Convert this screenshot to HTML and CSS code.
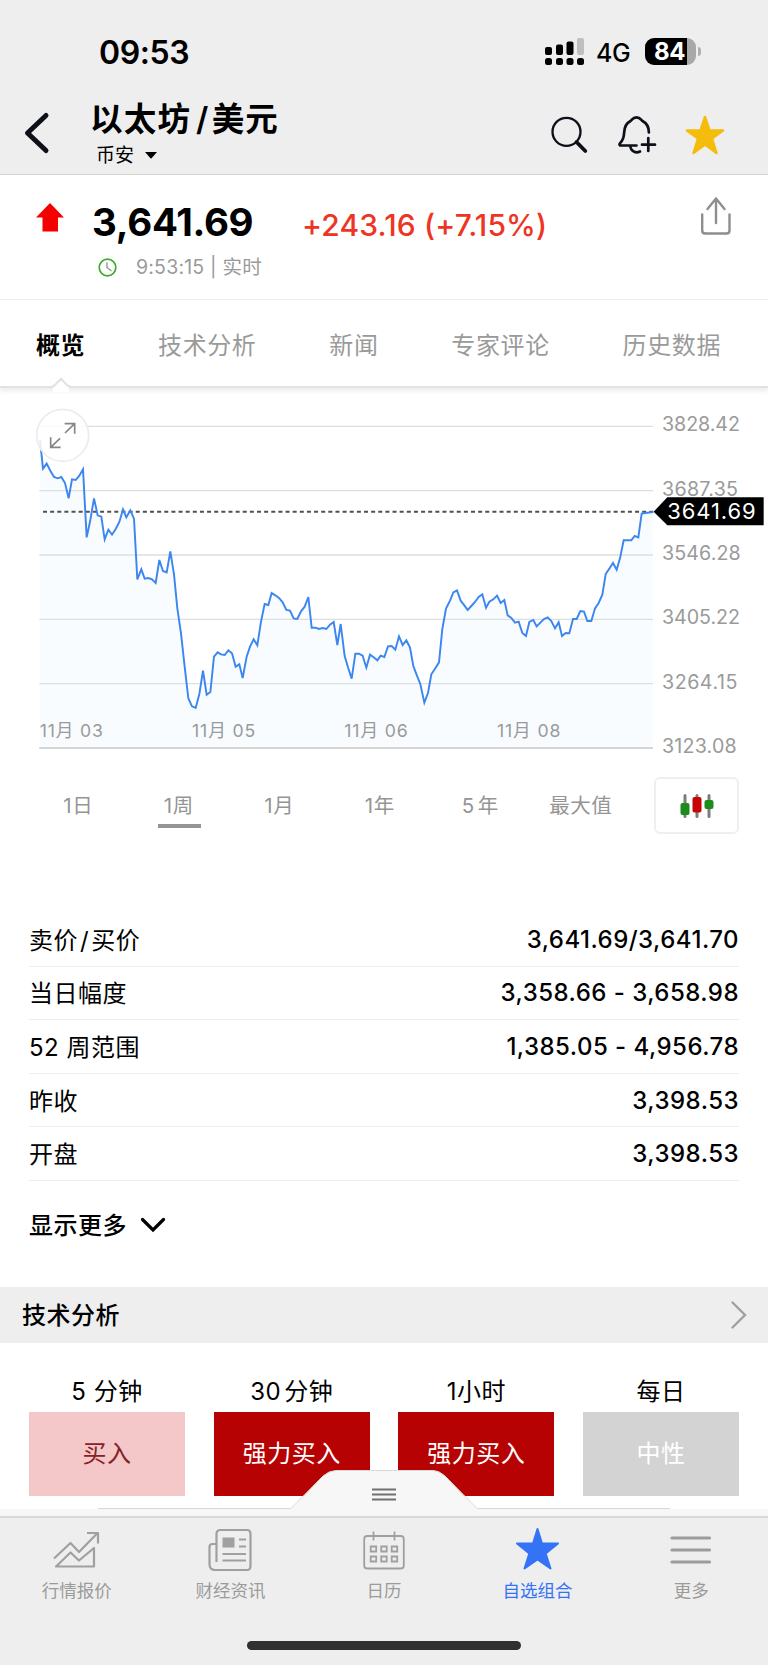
FILE: index.html
```html
<!DOCTYPE html>
<html lang="zh-CN">
<head>
<meta charset="utf-8">
<title>以太坊/美元</title>
<link rel="stylesheet" href="styles.css">
</head>
<body>
<main class="screen">
  <header class="top">
    <div class="status">
      <span class="time">09:53</span>
      <svg class="signal" width="40" height="28" viewBox="0 0 40 28"><g fill="#000"><rect x="0" y="9" width="7" height="8" rx="2"/><rect x="11" y="6.500" width="7" height="10.500" rx="2"/><rect x="21.500" y="3.500" width="7" height="13.500" rx="2"/><rect x="0" y="20" width="7" height="7" rx="2.500"/><rect x="11" y="20" width="7" height="7" rx="2.500"/><rect x="21.500" y="20" width="7" height="7" rx="2.500"/><rect x="32" y="20" width="7" height="7" rx="2.500"/></g><rect x="32" y="0" width="7" height="17" rx="2" fill="#bfbfbf"/></svg>
      <span class="net">4G</span>
      <span class="battery"><span class="level">84</span></span><span class="nub"></span>
    </div>
    <div class="nav">
      <svg class="back" width="26" height="44" viewBox="0 0 26 44"><path d="M23 4.500 4.500 22l18.500 17.500" fill="none" stroke="#0d1019" stroke-width="5" stroke-linecap="round" stroke-linejoin="round"/></svg>
      <div class="names">
        <h1>以太坊<i>/</i>美元</h1>
        <div class="exchange">币安<svg width="12" height="7" viewBox="0 0 12 7"><path d="M0 0h12L6.500 6.200q-.5.500-1 0z"/></svg></div>
      </div>
      <svg class="search" width="38" height="38" viewBox="0 0 38 38" fill="none" stroke="#0d1019"><circle cx="15.500" cy="15.800" r="14" stroke-width="2.300"/><path d="m25.500 26 8.800 9" stroke-width="3.800" stroke-linecap="round"/></svg>
      <svg class="bell" width="40" height="40" viewBox="0 0 40 40" fill="none" stroke="#0d1019" stroke-width="2.700" stroke-linecap="round" stroke-linejoin="round"><path d="M19.500 30.500H3q-1.200-.8.300-2.600c3-3 3.600-5.400 3.800-9.900.2-7 2.400-10 6.400-12 1.600-.8 2-3.700 6-3.700s4.400 2.900 6 3.700c4 2 6.400 5 6.400 11.500M13.500 32.500c1 4 5.500 6 9.500 4M31.300 23v13M25 29.700h13"/></svg>
      <svg class="fav" width="40" height="40" viewBox="0 0 40 40"><path d="M20 2 24.500 15.500H38L27 23.500 31.500 38 20 29.500 8.500 38 13 23.500 2 15.500H15.500Z" fill="#f4bc0b" stroke="#f4bc0b" stroke-width="2.500" stroke-linejoin="round"/></svg>
    </div>
  </header>

  <section class="quote">
    <svg class="up" width="28" height="29" viewBox="0 0 28 29"><path d="M14 0 28 14.500H22V28.500H6.500V14.500H0Z" fill="#f40000"/></svg>
    <div class="price-block">
      <div class="price-line"><strong>3,641.69</strong><span class="change">+243.16 (+7.15%)</span></div>
      <div class="stamp"><svg width="19" height="19" viewBox="0 0 19 19" fill="none"><circle cx="9.500" cy="9.500" r="8.300" stroke="#3fab2b" stroke-width="1.700"/><path d="M9 4.500V9.500l4.500 3.500" stroke="#8c9a8c" stroke-width="1.400"/></svg><span>9:53:15 | 实时</span></div>
    </div>
    <svg class="share" width="30" height="38" viewBox="0 0 30 38" fill="none" stroke="#8e8e8e" stroke-width="2.400" stroke-linecap="round" stroke-linejoin="round"><path d="M1.200 17.500V33.500q0 3 3 3H25.500q3 0 3-3V17.500M15 26V1.500M6.500 12 15 1.500 23.500 12"/></svg>
  </section>

  <nav class="tabs">
    <a class="on">概览</a><a>技术分析</a><a>新闻</a><a>专家评论</a><a>历史数据</a>
    <svg class="notch" width="20" height="14" viewBox="0 0 20 14"><path d="M2 8.500 10 1 18 8.500 18 14H2Z" fill="#fff"/><path d="M0 8.800Q2.500 8.800 4 7L10 .8 16 7Q17.500 8.800 20 8.800" fill="none" stroke="#e2e2e2" stroke-width="2"/></svg>
  </nav>

  <section class="chart">
    <svg width="768" height="370" viewBox="0 0 2304 1110">
      <path d="M120 150 129 236 140 221 151 242 162 261 173 265 184 261 195 279 206 325 216 268 227 270 238 257 249 238 260 442 271 390 282 325 293 376 304 380 314 448 325 419 336 434 347 417 358 396 369 358 379 382 391 361 402 386 412 568 424 538 434 566 445 564 456 568 467 579 478 510 489 543 500 547 511 484 522 553 532 655 543 730 554 830 565 925 576 949 587 954 598 912 609 842 620 914 631 906 642 800 653 787 663 793 674 795 685 781 696 790 707 830 718 823 728 864 740 800 750 770 761 748 772 766 783 695 794 642 805 645 815 609 826 616 837 624 848 637 859 660 870 662 881 685 892 687 903 664 914 650 925 621 935 713 946 713 957 717 968 714 979 717 990 704 1001 696 1012 765 1022 702 1034 798 1044 832 1055 866 1066 791 1077 791 1088 797 1099 833 1110 794 1121 802 1132 811 1142 797 1153 801 1164 769 1175 768 1186 779 1197 739 1208 765 1219 751 1230 773 1240 828 1252 860 1261 882 1273 938 1284 909 1294 853 1306 835 1317 817 1327 717 1338 656 1350 632 1360 607 1371 601 1382 632 1393 646 1403 660 1414 648 1425 636 1436 621 1447 613 1458 653 1468 635 1480 628 1491 617 1502 639 1513 630 1523 676 1534 684 1545 698 1556 695 1567 729 1578 738 1588 696 1600 690 1610 709 1621 698 1632 687 1643 682 1654 693 1665 715 1676 697 1686 738 1697 729 1708 730 1719 687 1730 687 1741 663 1752 665 1762 693 1774 693 1785 655 1796 639 1807 614 1817 552 1828 536 1839 519 1850 539 1860 505 1871 451 1894 451 1904 438 1915 442 1925 371 1959 366V1073H120Z" fill="#f8fcff"/>
      <g stroke="#dcdfe0" stroke-width="4"><path d="M118 109H1959M118 302H1959M118 495H1959M118 688H1959M118 881H1959"/><path d="M118 1074H1959" stroke="#d3d5d6" stroke-width="6"/></g>
      <path d="M129 365H1965" stroke="#505050" stroke-width="6" stroke-dasharray="12 9.400"/>
      <path d="M120 150 129 236 140 221 151 242 162 261 173 265 184 261 195 279 206 325 216 268 227 270 238 257 249 238 260 442 271 390 282 325 293 376 304 380 314 448 325 419 336 434 347 417 358 396 369 358 379 382 391 361 402 386 412 568 424 538 434 566 445 564 456 568 467 579 478 510 489 543 500 547 511 484 522 553 532 655 543 730 554 830 565 925 576 949 587 954 598 912 609 842 620 914 631 906 642 800 653 787 663 793 674 795 685 781 696 790 707 830 718 823 728 864 740 800 750 770 761 748 772 766 783 695 794 642 805 645 815 609 826 616 837 624 848 637 859 660 870 662 881 685 892 687 903 664 914 650 925 621 935 713 946 713 957 717 968 714 979 717 990 704 1001 696 1012 765 1022 702 1034 798 1044 832 1055 866 1066 791 1077 791 1088 797 1099 833 1110 794 1121 802 1132 811 1142 797 1153 801 1164 769 1175 768 1186 779 1197 739 1208 765 1219 751 1230 773 1240 828 1252 860 1261 882 1273 938 1284 909 1294 853 1306 835 1317 817 1327 717 1338 656 1350 632 1360 607 1371 601 1382 632 1393 646 1403 660 1414 648 1425 636 1436 621 1447 613 1458 653 1468 635 1480 628 1491 617 1502 639 1513 630 1523 676 1534 684 1545 698 1556 695 1567 729 1578 738 1588 696 1600 690 1610 709 1621 698 1632 687 1643 682 1654 693 1665 715 1676 697 1686 738 1697 729 1708 730 1719 687 1730 687 1741 663 1752 665 1762 693 1774 693 1785 655 1796 639 1807 614 1817 552 1828 536 1839 519 1850 539 1860 505 1871 451 1894 451 1904 438 1915 442 1925 371 1959 366" fill="none" stroke="#3c86f0" stroke-width="5.800" stroke-linejoin="miter"/>
      <g class="axis">
        <text x="1986" y="124" textLength="234">3828.42</text><text x="1986" y="317" textLength="228">3687.35</text><text x="1986" y="510" textLength="236">3546.28</text><text x="1986" y="703" textLength="234">3405.22</text><text x="1986" y="896" textLength="226">3264.15</text><text x="1986" y="1089" textLength="224">3123.08</text>
      </g>
      <g class="dates">
        <text x="119" y="1041" textLength="190">11月 03</text><text x="576" y="1041" textLength="190">11月 05</text><text x="1033" y="1041" textLength="190">11月 06</text><text x="1491" y="1041" textLength="190">11月 08</text>
      </g>
      <path d="M1961 365 2002 322H2291V406H2002Z" fill="#000"/>
      <text class="tag" x="2002" y="388" textLength="265">3641.69</text>
      <circle cx="188" cy="136" r="78" fill="#fff" fill-opacity=".85" stroke="#ececec" stroke-width="5"/>
      <path d="M195 129 224 101M194 101H224V131M180 145 152 172M152 142V172H182" fill="none" stroke="#858585" stroke-width="5"/>
    </svg>
  </section>

  <section class="ranges">
    <a><b>1日</b></a><a class="on"><b>1周</b></a><a><b>1月</b></a><a><b>1年</b></a><a><b>5<s></s>年</b></a><a><b>最大值</b></a>
    <span class="candles"><svg width="34" height="24" viewBox="0 0 34 24"><g stroke="#7d7d7d" stroke-width="3" stroke-linecap="round"><path d="M5 1.500V22.500M17 1.500V22.500M29 1.500V22.500"/></g><g><rect x=".5" y="9" width="9" height="12" rx="2" fill="#1c8c1c"/><rect x="12.500" y="3" width="9" height="15.500" rx="2" fill="#c60606"/><rect x="24.500" y="6" width="9" height="9" rx="2" fill="#1c8c1c"/></g></svg></span>
  </section>

  <dl class="facts">
    <div><dt>卖价<i>/</i>买价</dt><dd>3,641.69/3,641.70</dd></div>
    <div><dt>当日幅度</dt><dd>3,358.66 - 3,658.98</dd></div>
    <div><dt>52 周范围</dt><dd>1,385.05 - 4,956.78</dd></div>
    <div><dt>昨收</dt><dd>3,398.53</dd></div>
    <div><dt>开盘</dt><dd>3,398.53</dd></div>
  </dl>
  <div class="more"><span>显示更多</span><svg width="26" height="16" viewBox="0 0 26 16"><path d="M2.500 2.500 13 13 23.500 2.500" fill="none" stroke="#000" stroke-width="3.200" stroke-linecap="round"/></svg></div>

  <div class="heading"><span>技术分析</span><svg width="17" height="30" viewBox="0 0 17 30"><path d="M2.500 2.500 15 15 2.500 27.500" fill="none" stroke="#a0a0a0" stroke-width="2.400" stroke-linecap="round"/></svg></div>

  <section class="signals">
    <div><h3>5 分钟</h3><p class="buy">买入</p></div>
    <div><h3>30<s></s>分钟</h3><p class="strong">强力买入</p></div>
    <div><h3>1小时</h3><p class="strong">强力买入</p></div>
    <div><h3>每日</h3><p class="neutral">中性</p></div>
  </section>

  <footer class="dock">
    <svg class="drawer" width="768" height="47" viewBox="0 0 768 47"><path d="M0 39H291L322 7Q329 .5 336 .5H433Q439 .5 445 6L477 39H768V47H0Z" fill="#f7f7f7"/><path d="M98 38.500H291L323 6Q329 .5 336 .5H433Q439 .5 445 6L477 38.500H670" fill="none" stroke="#d8d8d8"/><path d="M372 19.500H396M372 24.500H396M372 29.500H396" stroke="#707070" stroke-width="1.800"/></svg>
    <nav class="tabbar">
      <a><svg width="48" height="46" viewBox="0 0 48 46" fill="none" stroke="#a0a0a0" stroke-width="2.200" stroke-linejoin="round"><path d="M1 30.500 17.500 15 26 24 44.500 5M34 5H45V15.500M3 38.500 17.500 24.500 26 32.500 41 20V38.500Z"/></svg>行情报价</a>
      <a><svg width="48" height="46" viewBox="0 0 48 46" fill="none" stroke="#a0a0a0" stroke-width="2.200"><path d="M10.500 34V6Q10.500 2 14.500 2H41Q44.500 2 44.500 6V38Q44.500 42 41 42H9Q3.500 42 3.500 36V19Q3.500 16 6.500 16H10.500"/><path d="M16.500 26H40M16.500 32.500H40M33 11.500H40M33 18.500H40"/><path d="M16.500 9.500H28.500V19.500H16.500Z" fill="#a0a0a0" stroke="none"/></svg>财经资讯</a>
      <a><svg width="48" height="46" viewBox="0 0 48 46" fill="none" stroke="#a0a0a0" stroke-width="1.800"><rect x="4.200" y="8" width="39.600" height="32.500" rx="3"/><path d="M13.500 3.500V12.500M34.500 3.500V12.500"/><path d="M10.700 18.500h5.500v5h-5.500zM21.200 18.500h5.500v5h-5.500zM31.700 18.500h5.500v5h-5.500zM10.700 28.500h5.500v5h-5.500zM21.200 28.500h5.500v5h-5.500zM31.700 28.500h5.500v5h-5.500z"/></svg>日历</a>
      <a class="on"><svg width="48" height="46" viewBox="0 0 48 46"><path d="M23.500 1 28 15.500H44L31.700 25.500 36.500 40.500 23.500 31.500 10.500 40.500 15.300 25.500 3 15.500H19Z" fill="#3573f6" stroke="#3573f6" stroke-width="2" stroke-linejoin="round"/></svg>自选组合</a>
      <a><svg width="48" height="46" viewBox="0 0 48 46" stroke="#9c9c9c" stroke-width="3.200" stroke-linecap="round"><path d="M5 10H42.500M5 22H42.500M5 34H42.500"/></svg>更多</a>
    </nav>
    <div class="home"></div>
  </footer>
</main>
</body>
</html>
```

FILE: styles.css
```css
* { box-sizing: border-box; margin: 0; padding: 0; }
body { background: #fff; color: #000; font-family: Inter, "Noto Sans CJK SC", sans-serif; }
i { font-style: normal; }
s { display: inline-block; width: 3px; }
svg { display: block; flex: none; overflow: visible; }
.screen { width: 768px; height: 1665px; display: flex; flex-direction: column; overflow: hidden; }
.screen > * { flex: none; }

.top { height: 175px; background: #eeeeee; border-bottom: 1.500px solid #d2d2d2; }
.status { height: 99px; padding: 38px 0 0 99px; display: flex; align-items: flex-start; }
.time { width: 446px; font-size: 32px; line-height: 30px; font-weight: 600; letter-spacing: -.4px; }
.net { width: 49px; margin-left: 11px; font-size: 25px; line-height: 30px; letter-spacing: -.5px; font-weight: 500; }
.battery { width: 51px; height: 27px; border-radius: 9px; overflow: hidden; background: linear-gradient(90deg, #000 42.500px, #a8a8a8 42.500px); }
.level { display: block; padding-left: 9px; color: #fff; font-size: 24px; font-weight: 700; line-height: 28px; letter-spacing: -.3px; }
.nub { width: 3px; height: 9px; margin: 9px 0 0 2px; border-radius: 0 4px 4px 0; background: #b0b0b0; }
.nav { height: 75px; padding-left: 23px; display: flex; align-items: flex-start; }
.back { margin-top: 12px; }
.names { width: 460px; padding-left: 41px; }
h1 { height: 42px; line-height: 42px; font-size: 32.500px; font-weight: 700; letter-spacing: 1.200px; white-space: nowrap; }
h1 i { padding: 0 2px 0 5px; font-weight: 600; }
.exchange { display: flex; align-items: center; gap: 11px; margin-top: 1px; padding-left: 6px; font-size: 19px; line-height: 27px; }
.search { margin: 17px 0 0 42px; }
.bell { margin: 16px 0 0 28px; }
.fav { margin: 16px 0 0 28px; }

.quote { height: 125px; padding: 29px 37px 0 36px; display: flex; align-items: flex-start; border-bottom: 1px solid #eeeeee; }
.up { margin-top: -1px; }
.price-block { width: 637px; padding-left: 28px; }
.price-line { height: 54px; display: flex; align-items: baseline; }
.price-line strong { width: 210px; font-size: 38.500px; line-height: 36px; font-weight: 700; letter-spacing: -.3px; }
.change { color: #ee3524; font-size: 30px; font-weight: 450; letter-spacing: .15px; }
.stamp { display: flex; align-items: center; gap: 19px; padding-left: 6px; color: #9a9a9a; font-size: 19.500px; line-height: 19px; letter-spacing: .2px; }
.share { margin-top: -7px; }

.tabs { position: relative; height: 88px; padding: 1px 47px 0 36px; display: flex; align-items: center; justify-content: space-between; color: #9a9a9a; font-size: 24px; letter-spacing: .6px; border-bottom: 2px solid #e2e2e2; box-shadow: 0 3px 5px #ececec; }
.tabs .on { color: #000; font-weight: 700; }
.notch { position: absolute; left: 51px; bottom: -6px; }

.chart { margin-top: 2px; height: 387px; }
.axis text { font-family: Inter; font-size: 59px; fill: #9a9a9a; }
.dates text { font-size: 53px; fill: #9a9a9a; }
.tag { font-family: Inter; font-size: 66px; fill: #fff; }

.ranges { height: 57px; padding-left: 28px; display: flex; align-items: center; color: #959595; font-size: 20.500px; letter-spacing: .5px; }
.ranges a { position: relative; width: 100.500px; height: 57px; padding-bottom: 3px; display: flex; justify-content: center; align-items: center; }
.ranges b { font-weight: 400; }
.ranges .on::after { content: ""; position: absolute; left: 29px; bottom: 6px; width: 43px; height: 4px; background: #959595; }
.candles { width: 85px; height: 57px; margin-left: 23px; border: 2px solid #efefef; border-radius: 6px; display: flex; align-items: center; justify-content: center; }

.facts { margin: 79px 29px 0; }
.facts div { height: 53.600px; display: flex; justify-content: space-between; align-items: center; border-bottom: 1px solid #eeeeee; font-size: 24px; }
dt { letter-spacing: .5px; padding-bottom: 2px; }
dt i { padding: 0 2px; }
dd { font-weight: 500; letter-spacing: .48px; }
.more { height: 106px; padding: 0 0 17px 29px; display: flex; align-items: center; gap: 13px; font-size: 24px; font-weight: 500; letter-spacing: .5px; }
.more span { padding-bottom: 3px; }

.heading { height: 56px; padding: 0 21px 0 22px; background: #eeeeee; display: flex; justify-content: space-between; align-items: center; font-size: 24px; font-weight: 500; letter-spacing: .5px; }
.heading span { padding-bottom: 2px; }

.signals { height: 166px; padding: 27px 29px 0; display: grid; grid-template-columns: repeat(4, 156px); justify-content: space-between; text-align: center; font-size: 24px; letter-spacing: .5px; }
h3 { height: 42px; line-height: 43px; font-size: 24px; font-weight: 400; }
.signals p { height: 84px; line-height: 84px; color: #fff; }
.signals .buy { background: #f4c7c9; color: #872126; }
.strong { background: #b70204; }
.neutral { background: #d3d3d3; }

.dock { position: relative; height: 159px; padding-top: 7px; }
.drawer { position: absolute; left: 0; top: -39px; }
.tabbar { position: relative; height: 125px; padding-top: 10px; background: #eeeeee; border-top: 2px solid #d8d8d8; display: grid; grid-template-columns: repeat(5, 1fr); }
.tabbar a { display: flex; flex-direction: column; align-items: center; color: #9b9b9b; font-size: 17.500px; line-height: 34px; }
.tabbar .on { color: #3573f6; }
.home { height: 27px; background: #eeeeee; display: flex; justify-content: center; }
.home::before { content: ""; width: 274px; height: 9px; border-radius: 5px; background: #303030; }
```
